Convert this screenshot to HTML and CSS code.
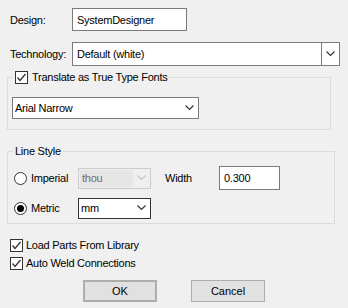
FILE: index.html
```html
<!DOCTYPE html>
<html lang="en">
<head>
  <meta charset="UTF-8">
  <title>Design Settings</title>
  <link rel="stylesheet" href="styles.css">
</head>
<body>

<div class="dialog">
  <div class="row">
    <label class="lbl">Design:</label>
    <div class="input design">SystemDesigner</div>
  </div>

  <div class="row tech">
    <label class="lbl">Technology:</label>
    <div class="combo wide">
      <span class="value">Default (white)</span>
      <span class="drop split">
        <svg width="9" height="6" viewBox="0 0 9 6"><polyline points="0.5,0.5 4.5,4.5 8.5,0.5" fill="none" stroke="#333" stroke-width="1.2"/></svg>
      </span>
    </div>
  </div>

  <fieldset class="group fonts">
    <legend class="legend-check">
      <span class="check"><svg width="11" height="11" viewBox="0 0 11 11"><polyline points="1.5,5.5 4,8.5 9.5,2" fill="none" stroke="#333" stroke-width="1.3"/></svg></span>
      Translate as True Type Fonts
    </legend>
    <div class="combo font-combo">
      <span class="value">Arial Narrow</span>
      <span class="drop">
        <svg width="9" height="6" viewBox="0 0 9 6"><polyline points="0.5,0.5 4.5,4.5 8.5,0.5" fill="none" stroke="#333" stroke-width="1.2"/></svg>
      </span>
    </div>
  </fieldset>

  <fieldset class="group line">
    <legend>Line Style</legend>
    <div class="ls-row first">
      <label class="opt"><span class="radio"></span>Imperial</label>
      <div class="combo small disabled">
        <span class="value">thou</span>
        <span class="drop">
          <svg width="9" height="6" viewBox="0 0 9 6"><polyline points="0.5,0.5 4.5,4.5 8.5,0.5" fill="none" stroke="#c4c4c4" stroke-width="1.2"/></svg>
        </span>
      </div>
      <label class="width-lbl">Width</label>
      <div class="input width">0.300</div>
    </div>
    <div class="ls-row second">
      <label class="opt"><span class="radio on"></span>Metric</label>
      <div class="combo small dark">
        <span class="value">mm</span>
        <span class="drop">
          <svg width="9" height="6" viewBox="0 0 9 6"><polyline points="0.5,0.5 4.5,4.5 8.5,0.5" fill="none" stroke="#333" stroke-width="1.2"/></svg>
        </span>
      </div>
    </div>
  </fieldset>

  <div class="checks">
    <label class="check-row">
      <span class="check"><svg width="11" height="11" viewBox="0 0 11 11"><polyline points="1.5,5.5 4,8.5 9.5,2" fill="none" stroke="#333" stroke-width="1.3"/></svg></span>
      Load Parts From Library
    </label>
    <label class="check-row">
      <span class="check"><svg width="11" height="11" viewBox="0 0 11 11"><polyline points="1.5,5.5 4,8.5 9.5,2" fill="none" stroke="#333" stroke-width="1.3"/></svg></span>
      Auto Weld Connections
    </label>
  </div>

  <div class="buttons">
    <button class="btn default">OK</button>
    <button class="btn">Cancel</button>
  </div>
</div>

</body>
</html>
```

FILE: styles.css
```css
body {
  margin: 0;
  width: 348px;
  height: 308px;
  overflow: hidden;
  background: #f0f0f0;
  font-family: 'Liberation Sans', Arial, sans-serif;
  font-size: 11px;
  letter-spacing: -0.25px;
  color: #000;
}

.dialog {
  padding-top: 8px;
}

.row {
  display: flex;
  align-items: center;
  padding-left: 10px;
}

.lbl {
  width: 62px;
}

.tech {
  margin-top: 11px;
}

.input {
  box-sizing: border-box;
  height: 23px;
  border: 1px solid #7a7a7a;
  background: #fff;
  padding-left: 4px;
  display: flex;
  align-items: center;
}

.design {
  width: 115px;
}

/* combo boxes */
.combo {
  box-sizing: border-box;
  display: flex;
  align-items: center;
  border: 1px solid #7a7a7a;
  background: #fff;
}

.combo .value {
  flex: 1;
  padding-left: 2px;
}

.combo .drop {
  width: 17px;
  align-self: stretch;
  display: flex;
  align-items: center;
  justify-content: center;
}

.combo .drop.split {
  border-left: 1px solid #7a7a7a;
}

.wide {
  width: 268px;
  height: 24px;
}

.wide .value {
  padding-left: 4px;
}

.font-combo {
  width: 187px;
  height: 22px;
  margin: 13px 0 10px 4px;
}

.small {
  width: 73px;
  height: 21px;
}

.small .value {
  padding-left: 2px;
}

.disabled {
  border-color: #cccccc;
  background: #efefef;
  color: #6d6d6d;
}

.disabled .value {
  background: #e6e6e6;
  margin: 1px 0 1px 1px;
  align-self: stretch;
  display: flex;
  align-items: center;
}

.dark {
  border-color: #333;
}

/* group boxes */
.group {
  margin: 0 0 0 7px;
  padding: 0;
  border: 1px solid #dcdcdc;
  min-width: 0;
  box-sizing: border-box;
}

.group legend {
  padding: 0 2px;
  margin-left: 5px;
  height: 14px;
  line-height: 14px;
}

.fonts {
  width: 324px;
  margin-top: 4px;
}

.legend-check {
  display: flex;
  align-items: center;
  gap: 4px;
}

.line {
  width: 328px;
  margin-top: 14px;
}

.ls-row {
  display: flex;
  align-items: center;
  height: 24px;
  padding-left: 6px;
}

.ls-row.first {
  margin-top: 8px;
}

.ls-row.second {
  margin-top: 6px;
  margin-bottom: 3px;
}

.opt {
  width: 64px;
  display: flex;
  align-items: center;
  gap: 4px;
}

.radio {
  box-sizing: border-box;
  width: 13px;
  height: 13px;
  border: 1px solid #333;
  border-radius: 50%;
  background: #fff;
  display: flex;
  align-items: center;
  justify-content: center;
}

.radio.on::after {
  content: '';
  width: 7px;
  height: 7px;
  border-radius: 50%;
  background: #000;
}

.width-lbl {
  margin-left: 14px;
  width: 54px;
}

.width {
  width: 61px;
  height: 24px;
}

/* check boxes */
.check {
  box-sizing: border-box;
  width: 13px;
  height: 13px;
  border: 1px solid #333;
  background: #fff;
  display: flex;
  align-items: center;
  justify-content: center;
}

.checks {
  margin-top: 14px;
  padding-left: 10px;
}

.check-row {
  display: flex;
  align-items: center;
  gap: 3px;
  height: 14px;
}

.check-row + .check-row {
  margin-top: 4px;
}

/* buttons */
.buttons {
  display: flex;
  gap: 34px;
  margin-top: 10px;
  padding-left: 83px;
}

.btn {
  box-sizing: border-box;
  width: 74px;
  height: 22px;
  border: 1px solid #adadad;
  background: #e1e1e1;
  font-family: inherit;
  font-size: 11px;
  color: #000;
  padding: 0;
}

.btn.default {
  border: 2px solid #adadad;
}
```
